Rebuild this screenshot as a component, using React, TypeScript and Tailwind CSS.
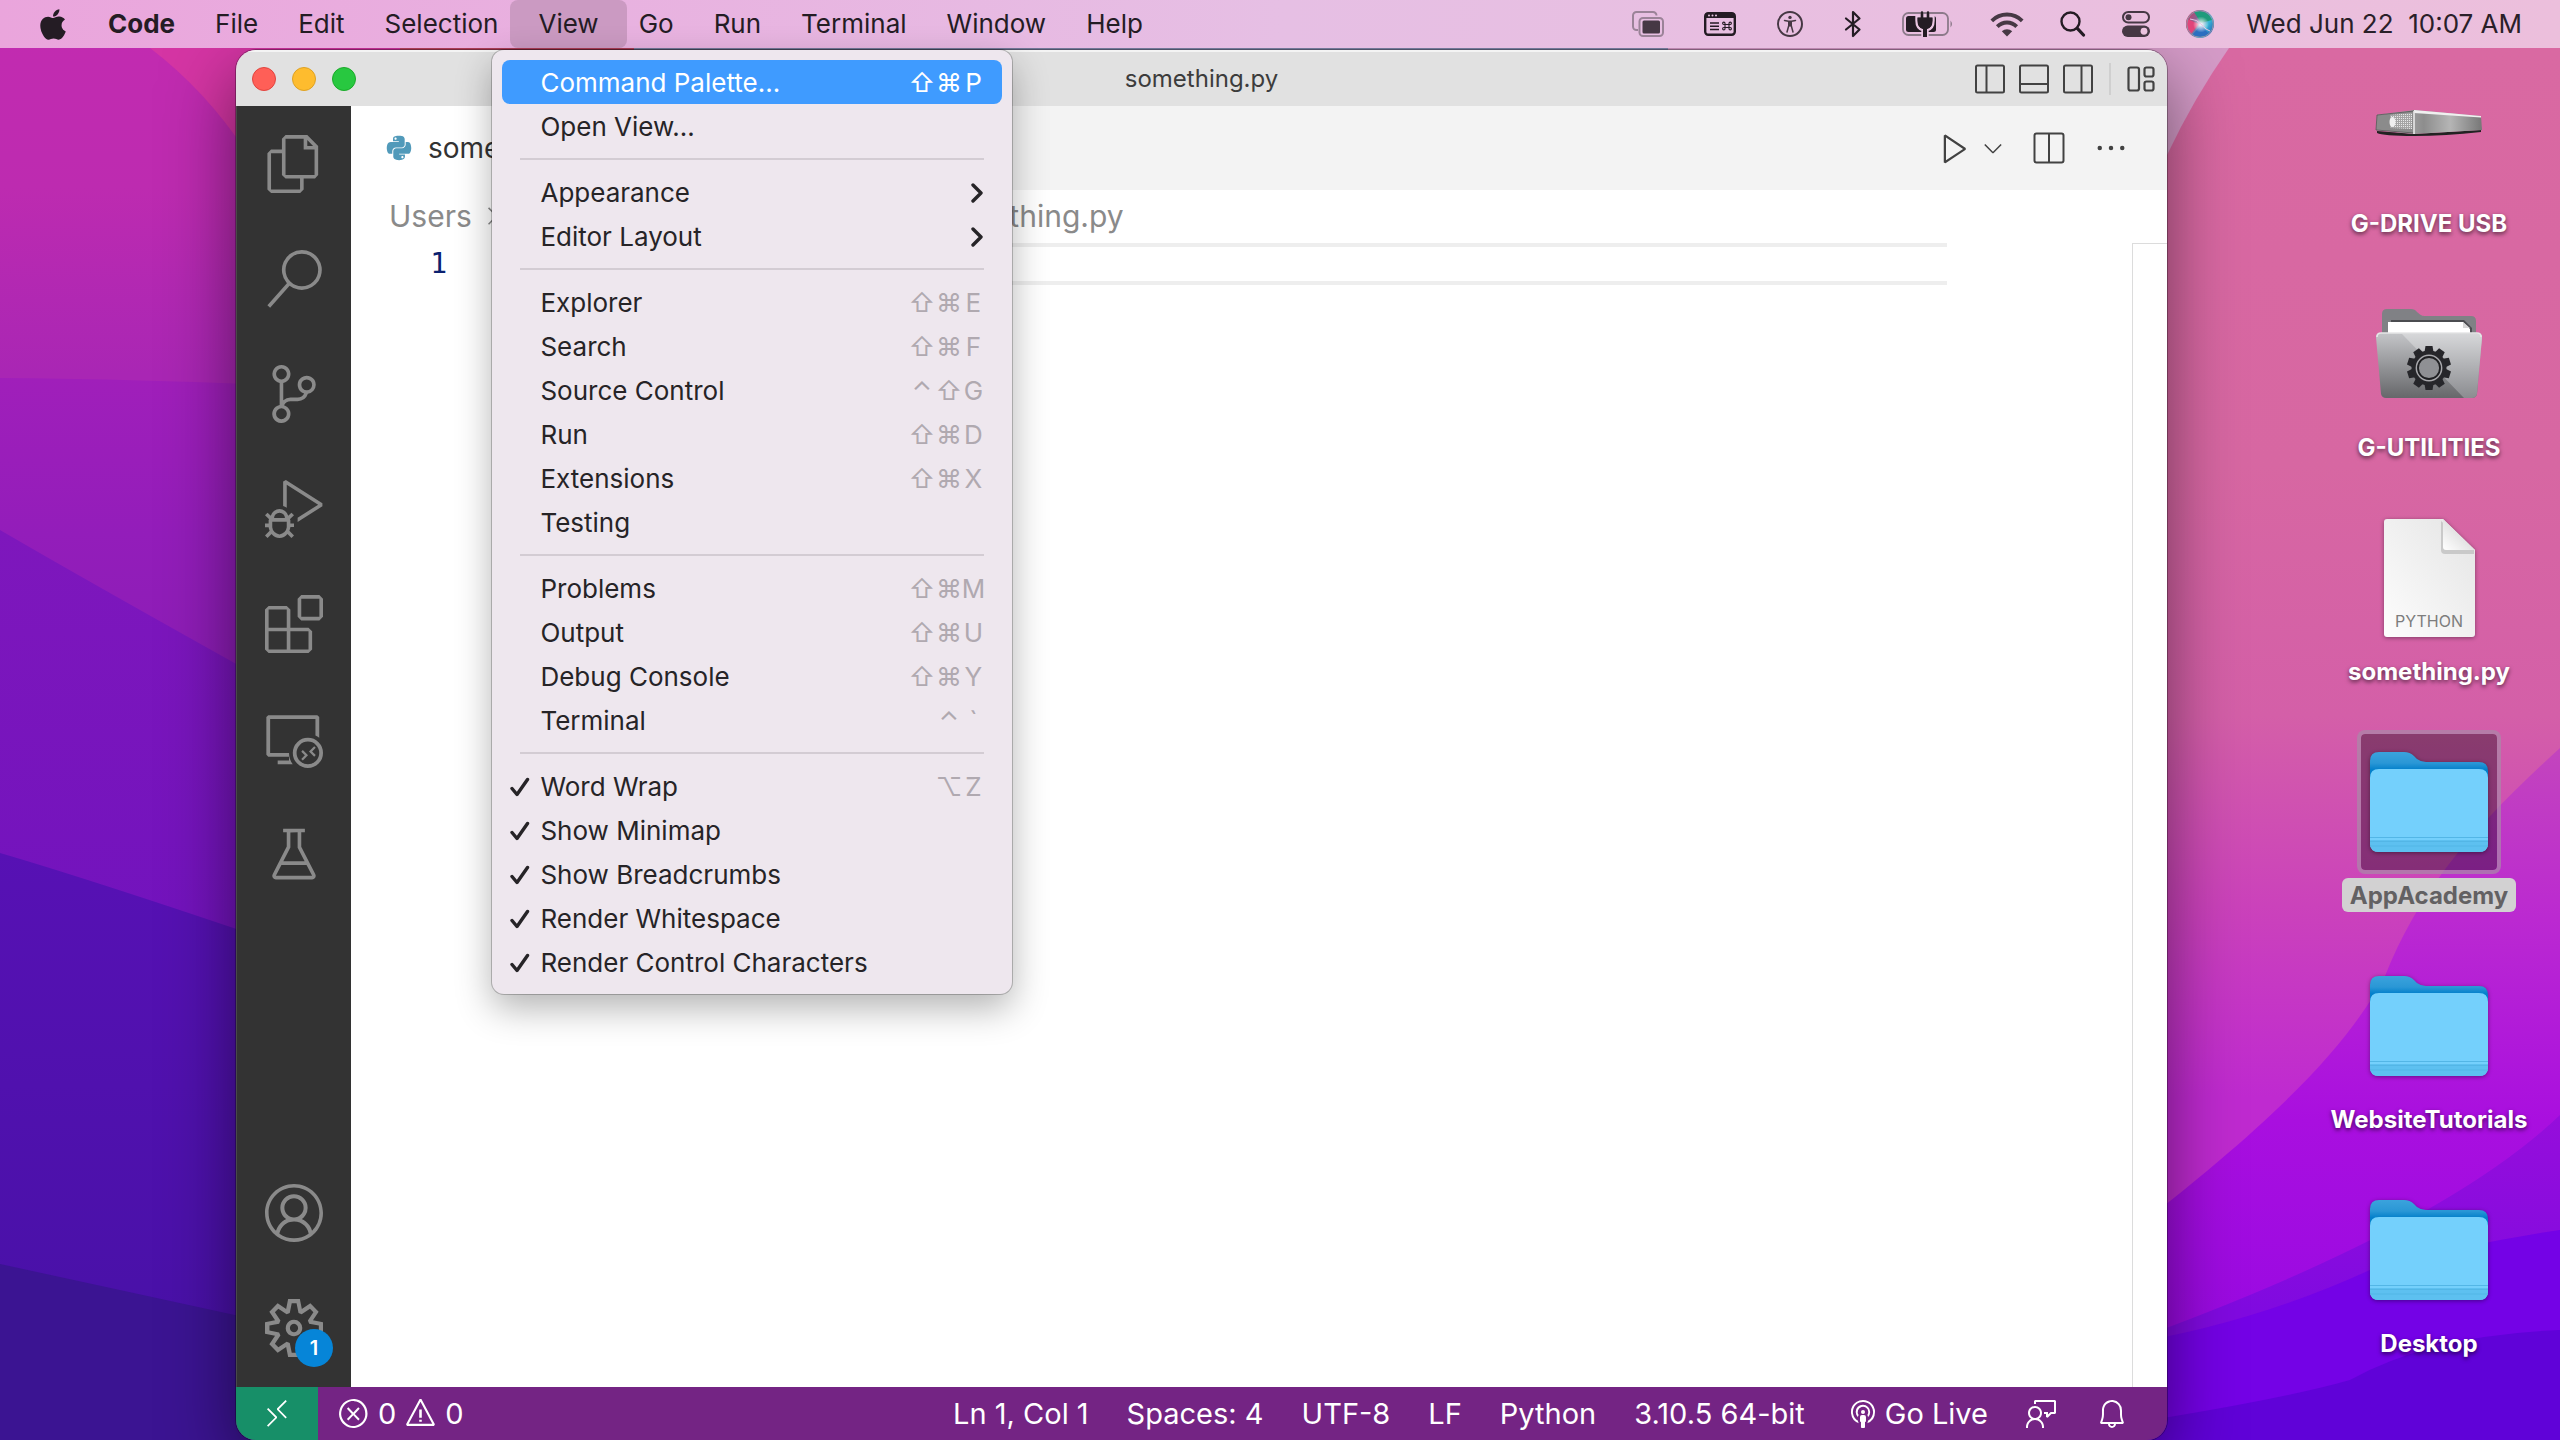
import React from 'react';
import { FaApple, FaPython } from 'react-icons/fa';
import {
  VscFiles,
  VscSearch,
  VscSourceControl,
  VscDebugAlt,
  VscExtensions,
  VscRemoteExplorer,
  VscBeaker,
  VscAccount,
  VscSettingsGear,
  VscRemote,
  VscError,
  VscWarning,
  VscBell,
  VscFeedback,
  VscBroadcast,
  VscChevronRight,
  VscChevronDown,
  VscPlay,
  VscEllipsis,
} from 'react-icons/vsc';

/* ---------- Wallpaper ---------- */

function Wallpaper() {
  return (
    <svg
      className="absolute inset-0 h-full w-full"
      viewBox="0 0 2560 1440"
      preserveAspectRatio="none"
      aria-hidden="true"
    >
      <defs>
        <linearGradient id="w1" x1="0" y1="0" x2="0" y2="1">
          <stop offset="0" stopColor="#c32bb0" />
          <stop offset="0.13" stopColor="#bd2bb0" />
          <stop offset="0.26" stopColor="#a926b4" />
          <stop offset="1" stopColor="#a926b4" />
        </linearGradient>
        <linearGradient id="w2" x1="0" y1="378" x2="0" y2="690" gradientUnits="userSpaceOnUse">
          <stop offset="0" stopColor="#a01fba" />
          <stop offset="0.5" stopColor="#931dba" />
          <stop offset="1" stopColor="#8b1db5" />
        </linearGradient>
        <linearGradient id="w3" x1="0" y1="530" x2="0" y2="940" gradientUnits="userSpaceOnUse">
          <stop offset="0" stopColor="#7e17bc" />
          <stop offset="1" stopColor="#7213bd" />
        </linearGradient>
        <linearGradient id="w4" x1="0" y1="850" x2="0" y2="1320" gradientUnits="userSpaceOnUse">
          <stop offset="0" stopColor="#5711b4" />
          <stop offset="1" stopColor="#4911a8" />
        </linearGradient>
        <linearGradient id="w5" x1="0" y1="48" x2="0" y2="1240" gradientUnits="userSpaceOnUse">
          <stop offset="0" stopColor="#d969a2" />
          <stop offset="0.35" stopColor="#d767a2" />
          <stop offset="0.56" stopColor="#d45fa8" />
          <stop offset="0.72" stopColor="#cb42bb" />
          <stop offset="0.88" stopColor="#bf2ad0" />
        </linearGradient>
        <linearGradient id="w6" x1="0" y1="748" x2="0" y2="1320" gradientUnits="userSpaceOnUse">
          <stop offset="0" stopColor="#c345bd" />
          <stop offset="0.3" stopColor="#bb29d1" />
          <stop offset="0.65" stopColor="#a90fdf" />
          <stop offset="1" stopColor="#9a0ae2" />
        </linearGradient>
        <linearGradient id="w7" x1="0" y1="1110" x2="0" y2="1310" gradientUnits="userSpaceOnUse">
          <stop offset="0" stopColor="#960edb" />
          <stop offset="1" stopColor="#800ae0" />
        </linearGradient>
      </defs>
      <rect width="2560" height="1440" fill="url(#w1)" />
      <path d="M150 48Q205 90 245 150V380H1200V48Z" fill="#d535a4" />
      <path d="M400 40H634V60H400Z" fill="#c24562" />
      <path d="M0 378Q120 378 400 390V1440H0Z" fill="url(#w2)" />
      <path d="M0 530Q120 600 400 755V1440H0Z" fill="url(#w3)" />
      <path d="M0 853Q120 888 400 985V1440H0Z" fill="url(#w4)" />
      <path d="M0 1264Q120 1290 400 1351V1440H0Z" fill="#3b1492" />
      <path d="M634 40H1668V60H634Z" fill="#8388ad" />
      <path d="M1668 40H2300V800H1668Z" fill="#d59bc8" />
      <path d="M2229 48Q2194 98 2167 155L2120 260V1440H2560V48Z" fill="url(#w5)" />
      <path d="M2560 748C2470 830 2420 890 2385 976C2350 1040 2290 1110 2120 1240V1440H2560Z" fill="url(#w6)" />
      <path d="M2560 1115Q2440 1230 2120 1345V1440H2560Z" fill="url(#w7)" />
      <path d="M2120 1345Q2250 1325 2370 1270Q2460 1245 2560 1230V1440H2120Z" fill="#7402e6" />
      <path d="M2560 1330Q2430 1335 2350 1380Q2280 1400 2120 1425V1440H2560Z" fill="#6002d8" />
    </svg>
  );
}

/* ---------- Menu bar ---------- */

type MenuEntry = { label: string; keys?: string[]; sub?: boolean; checked?: boolean; active?: boolean };

const viewMenu: MenuEntry[][] = [
  [{ label: 'Command Palette...', keys: ['⇧', '⌘', 'P'], active: true }, { label: 'Open View...' }],
  [
    { label: 'Appearance', sub: true },
    { label: 'Editor Layout', sub: true },
  ],
  [
    { label: 'Explorer', keys: ['⇧', '⌘', 'E'] },
    { label: 'Search', keys: ['⇧', '⌘', 'F'] },
    { label: 'Source Control', keys: ['⌃', '⇧', 'G'] },
    { label: 'Run', keys: ['⇧', '⌘', 'D'] },
    { label: 'Extensions', keys: ['⇧', '⌘', 'X'] },
    { label: 'Testing' },
  ],
  [
    { label: 'Problems', keys: ['⇧', '⌘', 'M'] },
    { label: 'Output', keys: ['⇧', '⌘', 'U'] },
    { label: 'Debug Console', keys: ['⇧', '⌘', 'Y'] },
    { label: 'Terminal', keys: ['⌃', '`'] },
  ],
  [
    { label: 'Word Wrap', keys: ['⌥', 'Z'], checked: true },
    { label: 'Show Minimap', checked: true },
    { label: 'Show Breadcrumbs', checked: true },
    { label: 'Render Whitespace', checked: true },
    { label: 'Render Control Characters', checked: true },
  ],
];

function MenuRow({ entry }: { entry: MenuEntry }) {
  const tone = entry.active ? 'bg-[#3f9bff] text-white' : 'text-[#262427]';
  const keyTone = entry.active ? 'text-white' : 'text-[#b0a9b0]';
  return (
    <button
      type="button"
      role={entry.checked ? 'menuitemcheckbox' : 'menuitem'}
      aria-checked={entry.checked}
      className={`flex h-11 w-full items-center rounded-lg pt-0.5 pr-[18px] text-left ${tone}`}
    >
      <span className="flex w-[38px] shrink-0 justify-center pr-0.5">
        {entry.checked && (
          <svg className="h-5 w-5" viewBox="0 0 20 20" fill="none" stroke="currentColor" strokeWidth="3.4" strokeLinecap="round" strokeLinejoin="round">
            <path d="M2 11.5L7 17.5L17.5 2.5" />
          </svg>
        )}
      </span>
      <span className="flex-1 whitespace-nowrap">{entry.label}</span>
      {entry.sub && (
        <svg className="mr-px h-5 w-3" viewBox="0 0 12 20" fill="none" stroke="currentColor" strokeWidth="3.4" strokeLinecap="round" strokeLinejoin="round">
          <path d="M2 2L10 10L2 18" />
        </svg>
      )}
      {entry.keys && (
        <span className={`flex ${keyTone}`}>
          {entry.keys.map((k, i) => (
            <kbd
              key={k}
              className={`flex justify-center font-[Inter] ${i === entry.keys!.length - 1 ? 'w-[22px]' : 'w-[27px]'}`}
            >
              {k}
            </kbd>
          ))}
        </span>
      )}
    </button>
  );
}

function ViewMenu() {
  return (
    <div
      role="menu"
      aria-label="View"
      className="absolute top-[50px] -left-[18px] z-20 w-[520px] rounded-xl bg-[#eee7ee] p-2.5 shadow-[0_0_0_1px_rgba(0,0,0,0.22),0_14px_36px_rgba(0,0,0,0.3)]"
    >
      {viewMenu.map((group, i) => (
        <React.Fragment key={i}>
          {i > 0 && <hr className="mx-[18px] my-2.5 h-0.5 border-0 bg-[#d3ccd3]" />}
          {group.map((e) => (
            <MenuRow key={e.label} entry={e} />
          ))}
        </React.Fragment>
      ))}
    </div>
  );
}

function StatusIcons() {
  return (
    <div className="flex items-center gap-9 text-[#463844]">
      <div className="flex items-center gap-10">
        <button type="button" aria-label="Screen overlay">
          <svg className="h-[26px] w-8" viewBox="0 0 32 26" fill="none">
            <path d="M6 19H4.500A3.500 3.500 0 0 1 1 15.500V4.500A3.500 3.500 0 0 1 4.500 1H21A3.500 3.500 0 0 1 24.500 4.500" stroke="#9b8398" strokeWidth="2" />
            <rect x="7.500" y="7" width="23.500" height="18" rx="3.500" stroke="#9b8398" strokeWidth="2" />
            <rect x="10.500" y="9.500" width="17.500" height="13" rx="1.500" fill="#463844" />
          </svg>
        </button>
        <button type="button" aria-label="Shortcuts">
          <svg className="h-6 w-8" viewBox="0 0 32 24">
            <rect x="1.200" y="1.200" width="29.600" height="21.600" rx="3" fill="none" stroke="#241c24" strokeWidth="2.400" />
            <path d="M1 3a2 2 0 0 1 2-2h26a2 2 0 0 1 2 2v3H1z" fill="#241c24" />
            <circle cx="5" cy="3.500" r="1" fill="#eac6e2" />
            <circle cx="8.500" cy="3.500" r="1" fill="#eac6e2" />
            <circle cx="12" cy="3.500" r="1" fill="#eac6e2" />
            <path d="M6 11h9M6 14.200h9M6 17.500h9" stroke="#241c24" strokeWidth="1.600" />
            <path d="M21 12.500h4v3h-4zM21 12.500h-1.200a1.200 1.200 0 1 1 1.200-1.200zM25 12.500v-1.200a1.200 1.200 0 1 1 1.200 1.200zM21 15.500v1.200a1.200 1.200 0 1 1-1.200-1.200zM25 15.500h1.200a1.200 1.200 0 1 1-1.200 1.200z" fill="none" stroke="#241c24" strokeWidth="1.100" />
          </svg>
        </button>
        <button type="button" aria-label="Accessibility">
          <svg className="h-7 w-7" viewBox="0 0 28 28" fill="none" stroke="#463844">
            <circle cx="14" cy="14" r="12" strokeWidth="2" />
            <circle cx="14" cy="7.400" r="1.700" fill="#463844" stroke="none" />
            <path d="M8.500 10.500L12.500 11.300h3L19.500 10.500" strokeWidth="1.500" strokeLinecap="round" />
            <path d="M12.800 15.500l-1.800 6.500M15.200 15.500l1.800 6.500" strokeWidth="1.500" strokeLinecap="round" />
            <path d="M12 11h4v5.500h-4z" fill="#463844" stroke="none" />
          </svg>
        </button>
        <button type="button" aria-label="Bluetooth">
          <svg className="h-7 w-[18px]" viewBox="0 0 18 28" fill="none" stroke="#241c24" strokeWidth="2.200" strokeLinejoin="round" strokeLinecap="round">
            <path d="M2 8.500L15.500 19.500L9 26V2L15.500 8.500L2 19.500" />
          </svg>
        </button>
        <button type="button" aria-label="Battery charging">
          <svg className="h-[26px] w-[52px]" viewBox="0 0 52 26">
            <rect x="1" y="2" width="45" height="22" rx="5.500" fill="none" stroke="#8c7a8a" strokeWidth="1.800" />
            <path d="M48.500 9.500Q51.500 13 48.500 16.500z" fill="#8c7a8a" />
            <rect x="4" y="5" width="30" height="16" rx="2.500" fill="#241c24" />
            <path d="M20 0v4.500M26 0v4.500M14.500 5.500h17v4q0 8-6 9.500v7h-5v-7q-6-1.500-6-9.500z" fill="#241c24" stroke="#eac6e2" strokeWidth="2.400" />
            <path d="M20 1.500v6M26 1.500v6" stroke="#241c24" strokeWidth="2.600" strokeLinecap="round" />
            <path d="M15.500 6.500h15v3q0 7.500-5.500 8.500v8h-4v-8q-5.500-1-5.500-8.500z" fill="#241c24" />
          </svg>
        </button>
      </div>
      <button type="button" aria-label="Wi-Fi">
        <svg className="h-[25px] w-[34px]" viewBox="0 0 34 25" fill="none" stroke="#463844" strokeWidth="3.800">
          <path d="M1.800 8.800A21.500 21.500 0 0 1 32.200 8.800" />
          <path d="M7.300 14.600A13.500 13.500 0 0 1 26.700 14.600" />
          <path d="M17 24.500L11.800 19.300A7.400 7.400 0 0 1 22.200 19.300Z" fill="#463844" stroke="none" />
        </svg>
      </button>
      <button type="button" aria-label="Spotlight">
        <svg className="h-[26px] w-[26px]" viewBox="0 0 26 26" fill="none" stroke="#241c24" strokeLinecap="round">
          <circle cx="10.500" cy="10.500" r="9" strokeWidth="2.400" />
          <path d="M17.300 17.300L23.500 24" strokeWidth="3.200" />
        </svg>
      </button>
      <button type="button" aria-label="Control Center">
        <svg className="h-[26px] w-7" viewBox="0 0 28 26">
          <rect x="1" y="1" width="26" height="10.500" rx="5.250" fill="none" stroke="#463844" strokeWidth="2" />
          <circle cx="6.500" cy="6.250" r="3" fill="#463844" />
          <rect y="14.500" width="28" height="11.500" rx="5.750" fill="#463844" />
          <circle cx="22" cy="20.250" r="3.400" fill="#ecc3df" />
        </svg>
      </button>
      <button type="button" aria-label="Siri">
        <svg className="h-7 w-7" viewBox="0 0 28 28">
          <defs>
            <linearGradient id="s1" x1="0" y1="0.200" x2="1" y2="0.800">
              <stop offset="0" stopColor="#c5406a" />
              <stop offset="0.400" stopColor="#7e6a9a" />
              <stop offset="0.700" stopColor="#35b7d6" />
              <stop offset="1" stopColor="#2a57b5" />
            </linearGradient>
            <radialGradient id="s2">
              <stop offset="0" stopColor="#fff" />
              <stop offset="1" stopColor="#fff" stopOpacity="0" />
            </radialGradient>
          </defs>
          <circle cx="14" cy="14" r="14" fill="url(#s1)" />
          <path d="M8 2a14 14 0 0 1 18 8l-11 3z" fill="#1f9b7c" />
          <path d="M1 9q-3 9 4 15l8-10z" fill="#e0447a" />
          <path d="M6 25q9 5 17-1l-8-9z" fill="#2b6fc0" />
          <circle cx="15" cy="14.500" r="8" fill="url(#s2)" />
          <path d="M4 9q7 0 12 6q4 5 8 6" stroke="#e8c3e4" strokeWidth="1" fill="none" />
          <circle cx="14" cy="14" r="13.300" fill="none" stroke="#8f94a8" strokeWidth="1" />
        </svg>
      </button>
      <time className="-ml-1 whitespace-pre text-[#2a2029]">Wed Jun 22  10:07 AM</time>
    </div>
  );
}

function MenuBar() {
  const item = 'h-12 px-5 whitespace-nowrap';
  return (
    <header className="relative z-10 flex h-12 items-center justify-between bg-linear-to-r from-[#eaa5dc] via-[#e6bfe4] to-[#ecbfdc] pr-[38px] pl-10 text-[#241c24]">
      <nav aria-label="Menu bar" className="flex items-center">
        <button type="button" aria-label="Apple menu" className="mr-[22px]">
          <FaApple className="h-[35px] w-[26px]" />
        </button>
        <button type="button" className={`${item} font-bold`}>Code</button>
        <button type="button" className={item}>File</button>
        <button type="button" className={item}>Edit</button>
        <button type="button" className={item}>Selection</button>
        <div className="relative -mx-2">
          <button type="button" aria-haspopup="menu" aria-expanded="true" className="h-12 rounded-lg bg-[#cb9ac2] px-7">
            View
          </button>
          <ViewMenu />
        </div>
        <button type="button" className={item}>Go</button>
        <button type="button" className={item}>Run</button>
        <button type="button" className={item}>Terminal</button>
        <button type="button" className={item}>Window</button>
        <button type="button" className={item}>Help</button>
      </nav>
      <StatusIcons />
    </header>
  );
}

/* ---------- Editor window ---------- */

function PanelIcon({ d, label }: { d: string; label: string }) {
  return (
    <button type="button" aria-label={label}>
      <svg className="h-[30px] w-[30px]" viewBox="0 0 30 30" fill="none" stroke="#424242" strokeWidth="2">
        <rect x="1" y="1.500" width="28" height="27" rx="1.500" />
        <path d={d} />
      </svg>
    </button>
  );
}

function TitleBar() {
  return (
    <div className="grid h-14 grid-cols-[1fr_auto_1fr] items-center border-t-2 border-[#f4f4f4] bg-[#e1e1e1] pr-3 pl-3">
      <div className="flex gap-4 pl-1">
        <button type="button" aria-label="Close" className="h-6 w-6 rounded-full border border-[#e0443e] bg-[#ff5f57]" />
        <button type="button" aria-label="Minimize" className="h-6 w-6 rounded-full border border-[#dea123] bg-[#febc2e]" />
        <button type="button" aria-label="Zoom" className="h-6 w-6 rounded-full border border-[#1aab29] bg-[#28c840]" />
      </div>
      <h1 className="text-2xl text-[#3c3c3c]">something.py</h1>
      <div className="flex items-center justify-end gap-3.5">
        <PanelIcon label="Toggle primary side bar" d="M11.500 2V28" />
        <PanelIcon label="Toggle panel" d="M2 20H28" />
        <PanelIcon label="Toggle secondary side bar" d="M18.500 2V28" />
        <span className="mx-0.5 h-8 w-0.5 bg-[#cfcfcf]" />
        <button type="button" aria-label="Customize layout">
          <svg className="h-7 w-7" viewBox="0 0 28 28" fill="none" stroke="#424242" strokeWidth="2.200">
            <rect x="1.500" y="2.500" width="10.500" height="23" rx="2" />
            <rect x="17.500" y="2.500" width="9" height="9" rx="2" />
            <rect x="17.500" y="16.500" width="9" height="9" rx="2" />
          </svg>
        </button>
      </div>
    </div>
  );
}

const activities = [
  { label: 'Explorer', Icon: VscFiles },
  { label: 'Search', Icon: VscSearch },
  { label: 'Source Control', Icon: VscSourceControl },
  { label: 'Run and Debug', Icon: VscDebugAlt },
  { label: 'Extensions', Icon: VscExtensions },
  { label: 'Remote Explorer', Icon: VscRemoteExplorer },
  { label: 'Testing', Icon: VscBeaker },
];

function ActivityBar() {
  const cell = 'relative flex h-[115px] w-full items-center justify-center';
  return (
    <nav aria-label="Activity bar" className="flex w-[115px] shrink-0 flex-col border-l border-[#4a4a4a] bg-[#333333] pb-0.5 text-[#8a8a8a]">
      {activities.map(({ label, Icon }) => (
        <button key={label} type="button" aria-label={label} className={cell}>
          <Icon className="h-[58px] w-[58px]" />
        </button>
      ))}
      <button type="button" aria-label="Accounts" className={`${cell} mt-auto`}>
        <VscAccount className="h-[58px] w-[58px]" />
      </button>
      <button type="button" aria-label="Manage" className={cell}>
        <VscSettingsGear className="h-[58px] w-[58px]" />
        <span className="absolute right-[18px] bottom-[18px] flex h-[38px] w-[38px] items-center justify-center rounded-full bg-[#0685d8] text-xl font-semibold text-white">
          1
        </span>
      </button>
    </nav>
  );
}

function Editor() {
  return (
    <main className="flex min-w-0 flex-1 flex-col bg-white">
      <div className="flex h-[84px] items-stretch bg-[#f3f3f3] text-[#424242]">
        <button type="button" className="flex w-[300px] items-center gap-4 bg-white pl-[35px] text-[28px] text-[#333333]">
          <FaPython className="h-7 w-[26px] text-[#519aba]" />
          something.py
        </button>
        <div className="ml-auto flex items-center pr-[38px]">
          <button type="button" aria-label="Run Python file">
            <VscPlay className="h-9 w-9" />
          </button>
          <button type="button" aria-label="Run options" className="ml-1.5">
            <VscChevronDown className="h-7 w-7" />
          </button>
          <button type="button" aria-label="Split editor" className="ml-[26px]">
            <svg className="h-8 w-8" viewBox="0 0 32 32" fill="none" stroke="#424242" strokeWidth="2">
              <rect x="1.500" y="1.500" width="29" height="29" rx="2" />
              <path d="M16 2V30" />
            </svg>
          </button>
          <button type="button" aria-label="More actions" className="ml-7">
            <VscEllipsis className="h-9 w-9" />
          </button>
        </div>
      </div>
      <nav aria-label="Breadcrumbs" className="flex h-[53px] items-center pb-0.5 pl-[38px] text-[30px] text-[#8a8a8a]">
        <span>Users</span>
        <VscChevronRight className="ml-1.5 h-7 w-7" />
        <span className="ml-[426px]">something.py</span>
      </nav>
      <div className="flex flex-1">
        <div className="w-[96px] text-right font-['DejaVu_Sans_Mono'] text-[28px] leading-[42px] text-[#0b216f]">1</div>
        <div className="ml-[53px] h-[42px] flex-1 border-y-4 border-[#eeeeee]" />
        <div className="ml-[185px] w-[35px] border-t border-l border-[#dcdcdc]" />
      </div>
    </main>
  );
}

function StatusBar() {
  return (
    <footer className="flex h-[53px] items-center bg-[#742484] text-[29px] text-white">
      <button type="button" aria-label="Open a remote window" className="flex h-full w-[82px] items-center justify-center bg-[#178f68]">
        <VscRemote className="h-8 w-8" />
      </button>
      <button type="button" className="ml-[19px] flex items-center gap-2">
        <VscError className="h-[33px] w-[33px]" />
        <span>0</span>
        <VscWarning className="h-[33px] w-[33px]" />
        <span>0</span>
      </button>
      <div className="ml-auto flex items-center gap-[38px] pr-[39px]">
        <button type="button">Ln 1, Col 1</button>
        <button type="button">Spaces: 4</button>
        <button type="button">UTF-8</button>
        <button type="button">LF</button>
        <button type="button">Python</button>
        <button type="button">3.10.5 64-bit</button>
        <button type="button" className="flex items-center gap-1.5 pl-1">
          <VscBroadcast className="h-8 w-8" />
          Go Live
        </button>
        <button type="button" aria-label="Tweet feedback">
          <VscFeedback className="h-8 w-8" />
        </button>
        <button type="button" aria-label="Notifications">
          <VscBell className="h-8 w-8" />
        </button>
      </div>
    </footer>
  );
}

function EditorWindow() {
  return (
    <section
      aria-label="something.py"
      className="mt-0.5 ml-[236px] flex min-w-0 flex-1 flex-col overflow-hidden rounded-[20px] shadow-[0_0_0_1px_rgba(0,0,0,0.3),0_24px_70px_rgba(0,0,0,0.5)]"
    >
      <TitleBar />
      <div className="flex flex-1">
        <ActivityBar />
        <Editor />
      </div>
      <StatusBar />
    </section>
  );
}

/* ---------- Desktop icons ---------- */

function DriveIcon() {
  return (
    <svg className="mb-3 h-8 w-[108px]" viewBox="0 0 108 32">
      <defs>
        <linearGradient id="d1" x1="0" y1="0" x2="1" y2="0">
          <stop offset="0" stopColor="#c9c9c9" />
          <stop offset="0.450" stopColor="#8d8d8d" />
          <stop offset="0.700" stopColor="#b5b5b5" />
          <stop offset="1" stopColor="#777" />
        </linearGradient>
        <pattern id="d2" width="2" height="2" patternUnits="userSpaceOnUse">
          <rect width="2" height="2" fill="#a5a5a5" />
          <rect width="1" height="1" fill="#e8e8e8" />
        </pattern>
      </defs>
      <path d="M2 23L39 26L106 22V24Q70 28 39 28Q8 28 2 25Z" fill="#222" />
      <path d="M2 7L39 2L106 8L107 22L39 26L1 22Z" fill="url(#d1)" />
      <path d="M39 2L106 8V9.500L39 5Z" fill="#f0f0f0" />
      <path d="M2 7L39 3V25L1 22Z" fill="#8b8b8b" stroke="#555" strokeWidth="0.800" />
      <path d="M15 7L37 5V21L15 20Z" fill="url(#d2)" />
      <ellipse cx="17.500" cy="14" rx="3" ry="5" fill="#f0f0f0" />
      <path d="M39 3V26" stroke="#fff" strokeWidth="1.400" />
    </svg>
  );
}

function UtilitiesIcon() {
  const teeth = [0, 36, 72, 108, 144, 180, 216, 252, 288, 324];
  return (
    <svg className="h-[90px] w-[106px]" viewBox="0 0 106 90">
      <defs>
        <linearGradient id="u1" x1="0" y1="0" x2="0" y2="1">
          <stop offset="0" stopColor="#c4c5c8" />
          <stop offset="1" stopColor="#66676a" />
        </linearGradient>
        <linearGradient id="u2" x1="0" y1="0" x2="0" y2="1">
          <stop offset="0" stopColor="#d6d7d9" />
          <stop offset="1" stopColor="#8b8c90" />
        </linearGradient>
      </defs>
      <path d="M6 40V5q0-5 5-5h24q4 0 6 3l3 2.500q2 1.500 5 1.500h46q5 0 5 5v28z" fill="#808185" />
      <path d="M15 30V11h73l8 8v12z" fill="#4b4c50" />
      <path d="M12 30V13h75l7 7v10z" fill="#fff" />
      <path d="M87 13v6h7z" fill="#d6d6d6" />
      <path d="M0 28q0-4 4-4h98q4 0 4 4l-5 57q-1 4-5 4H10q-4 0-5-4z" fill="url(#u1)" />
      <path d="M26 25h76q4 0 4 3l-5 57q-1 4-5 4h-8z" fill="url(#u2)" />
      <path d="M1 28q0-4 4-4h96q4 0 4 4" fill="none" stroke="#e6e6e8" strokeWidth="1.600" />
      <g transform="translate(53 59)" fill="#26262a">
        {teeth.map((a) => (
          <path key={a} d="M-4.500 -16L-3.500 -22H3.500L4.500 -16Z" transform={`rotate(${a})`} />
        ))}
        <circle r="17.500" />
        <circle r="12.500" fill="#808185" stroke="#a7a7ab" strokeWidth="1.800" />
        <circle r="11" fill="#8f9094" stroke="#1f1f22" strokeWidth="1.800" />
      </g>
    </svg>
  );
}

function DocumentIcon() {
  return (
    <div className="relative h-[118px] w-[91px]">
      <svg className="h-full w-full overflow-visible drop-shadow-[0_1px_2px_rgba(0,0,0,0.4)]" viewBox="0 0 91 118">
        <defs>
          <linearGradient id="p1" x1="1" y1="0" x2="0" y2="1">
            <stop offset="0" stopColor="#e4e4e4" />
            <stop offset="1" stopColor="#fdfdfd" />
          </linearGradient>
          <linearGradient id="p2" x1="0" y1="1" x2="0.600" y2="0.400">
            <stop offset="0" stopColor="#ffffff" />
            <stop offset="1" stopColor="#dedede" />
          </linearGradient>
        </defs>
        <path d="M3 0H59L91 31V115q0 3-3 3H3q-3 0-3-3V3q0-3 3-3z" fill="url(#p1)" />
        <path d="M57 2V31q0 4 4 4H90V31z" fill="#c9c9c9" />
        <path d="M59 0L91 31H62q-3 0-3-3z" fill="url(#p2)" />
      </svg>
      <span className="absolute inset-x-0 bottom-1.5 text-center text-base leading-5 text-[#7d7d7d]">PYTHON</span>
    </div>
  );
}

function FolderIcon() {
  return (
    <svg className="h-[100px] w-[118px] overflow-visible drop-shadow-[0_1px_2px_rgba(0,0,0,0.4)]" viewBox="0 0 118 100">
      <defs>
        <linearGradient id="f1" x1="0" y1="0" x2="0" y2="22" gradientUnits="userSpaceOnUse">
          <stop offset="0" stopColor="#3ba3dc" />
          <stop offset="0.500" stopColor="#2a97d6" />
          <stop offset="0.800" stopColor="#0480cb" />
        </linearGradient>
      </defs>
      <path d="M0 40V9q0-9 9-9H34q6 0 10 4l3 3q4 3 9 3H109q9 0 9 9V40z" fill="url(#f1)" />
      <path d="M0 26q0-9 9-9H109q9 0 9 9V91q0 9-9 9H9q-9 0-9-9z" fill="#74d0fc" />
      <path d="M0 88H118V91q0 9-9 9H9q-9 0-9-9z" fill="#5dc0f0" />
      <path d="M0 85.500H118M0 89.500H118M0 94H118" stroke="#53b6e6" strokeWidth="1.200" />
    </svg>
  );
}

function DesktopItem({ label, selected, children }: { label: string; selected?: boolean; children: React.ReactNode }) {
  const frame = selected ? 'border-4 border-[#a88aa6]/70 bg-black/35 bg-clip-padding' : '';
  const text = selected
    ? 'rounded-md bg-[#d2d1d2] text-[#636163]'
    : 'text-white [text-shadow:0_2px_4px_rgba(0,0,0,0.6)]';
  return (
    <button type="button" className="flex flex-col items-center gap-1">
      <span className={`flex h-36 w-36 items-center justify-center rounded-lg ${frame}`}>{children}</span>
      <span className={`h-[34px] px-2 text-2xl leading-9 font-bold whitespace-nowrap ${text}`}>{label}</span>
    </button>
  );
}

function DesktopIcons() {
  return (
    <aside aria-label="Desktop" className="flex w-[393px] shrink-0 flex-col gap-[42px] pt-2.5 pl-[131px]">
      <DesktopItem label="G-DRIVE USB"><DriveIcon /></DesktopItem>
      <DesktopItem label="G-UTILITIES"><UtilitiesIcon /></DesktopItem>
      <DesktopItem label="something.py"><DocumentIcon /></DesktopItem>
      <DesktopItem label="AppAcademy" selected><FolderIcon /></DesktopItem>
      <DesktopItem label="WebsiteTutorials"><FolderIcon /></DesktopItem>
      <DesktopItem label="Desktop"><FolderIcon /></DesktopItem>
    </aside>
  );
}

export default function App() {
  return (
    <div className="relative flex min-h-screen flex-col overflow-hidden font-[Inter,sans-serif] text-[26px] leading-8">
      <Wallpaper />
      <MenuBar />
      <div className="relative flex flex-1">
        <EditorWindow />
        <DesktopIcons />
      </div>
    </div>
  );
}
